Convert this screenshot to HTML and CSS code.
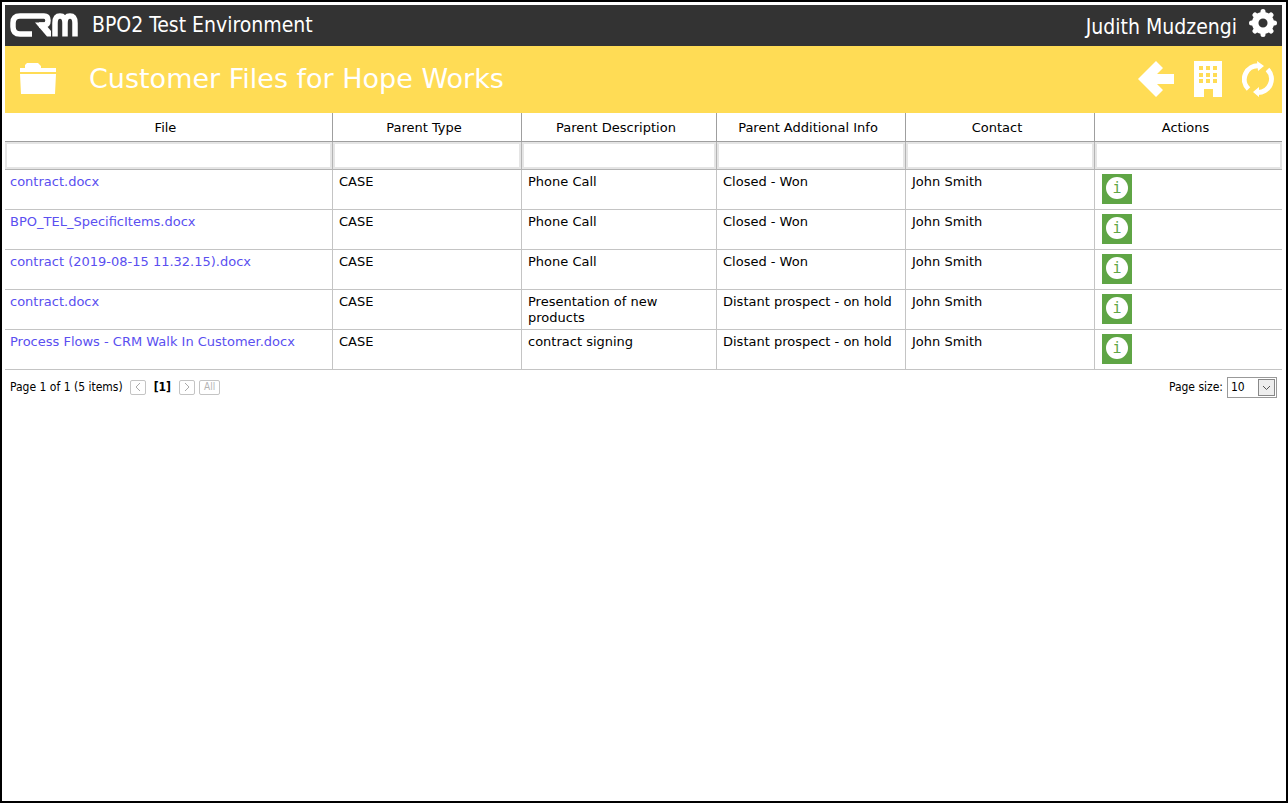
FILE: index.html
```html
<!DOCTYPE html>
<html lang="en">
<head>
<meta charset="utf-8">
<title>Customer Files for Hope Works</title>
<link rel="stylesheet" href="styles.css">
</head>
<body>
<header class="topbar">
  <svg class="logo" viewBox="0 0 68 24" role="img" aria-label="CRM logo" fill="none" stroke="#fff" stroke-width="5">
    <path d="M22 21H10Q3 21 3 14V10Q3 3 10 3H34Q38 3 38 7.500T34 12H29" stroke-width="5.500"/>
    <path fill="#fff" stroke="none" d="M25 9.500H34L41 18V23.500H37Z"/>
    <path d="M45 23.500V10Q45 3 50 3T55 10V23.500M55 10Q55 3 60 3T65 10V23.500" stroke-width="5.500"/>
  </svg>
  <span class="env">BPO2 Test Environment</span>
  <span class="user">Judith Mudzengi</span>
  <button class="icon-btn settings" type="button" aria-label="Settings">
    <svg width="28" height="28" viewBox="0 0 28 28">
      <circle cx="14" cy="14" r="7.800" fill="none" stroke="#fff" stroke-width="6.500"/>
      <g stroke="#fff" stroke-width="6" stroke-linecap="round"><path stroke-width="5" d="M14 2.500V6M14 22V25.500M2.500 14H6M22 14H25.500M6 6L8 8M20 20L22 22M22 6L20 8M6 22L8 20"/></g>
    </svg>
  </button>
</header>
<div class="titlebar">
  <svg class="folder" width="36" height="32" viewBox="0 0 36 32" fill="#fff">
    <path d="M0 9V5H5V2L7 0H18L21 3V5H36V9ZM0 11H36L35 31H1Z"/>
  </svg>
  <h1 class="title">Customer Files for Hope Works</h1>
  <button class="icon-btn" type="button" aria-label="Back">
    <svg width="36" height="36" viewBox="0 0 36 36" fill="#fff"><path d="M0 18L18 0L25 7L19 13H36V23H19L25 29L18 36Z"/></svg>
  </button>
  <button class="icon-btn" type="button" aria-label="Company">
    <svg width="28" height="36" viewBox="0 0 28 36" fill="#fff" fill-rule="evenodd"><path d="M0 0H28V36H19V28H10V36H0ZM5 5V9H9V5ZM12 5V9H16V5ZM19 5V9H23V5ZM5 12V16H9V12ZM12 12V16H16V12ZM19 12V16H23V12ZM5 18V22H9V18ZM12 18V22H16V18ZM19 18V22H23V18Z"/></svg>
  </button>
  <button class="icon-btn" type="button" aria-label="Refresh">
    <svg width="32" height="36" viewBox="0 0 32 36"><g fill="none" stroke="#fff" stroke-width="5"><path d="M6.500 28A13.500 13.500 0 0 1 17 4.800M25.500 8.500A13.500 13.500 0 0 1 15 31.500"/></g><path fill="#fff" d="M15 0L22 5L16 10ZM17 26V36L11 31Z"/></svg>
  </button>
</div>
<main>
<table class="grid">
  <colgroup><col><col class="c-mid"><col class="c-desc"><col class="c-mid"><col class="c-mid"><col class="c-act"></colgroup>
  <thead>
    <tr><th>File</th><th>Parent Type</th><th>Parent Description</th><th>Parent Additional Info</th><th>Contact</th><th>Actions</th></tr>
    <tr class="filters">
      <td><input type="text" aria-label="Filter File"></td><td><input type="text" aria-label="Filter Parent Type"></td><td><input type="text" aria-label="Filter Parent Description"></td><td><input type="text" aria-label="Filter Parent Additional Info"></td><td><input type="text" aria-label="Filter Contact"></td><td><input type="text" aria-label="Filter Actions"></td>
    </tr>
  </thead>
  <tbody>
    <tr><td><a href="#">contract.docx</a></td><td>CASE</td><td>Phone Call</td><td>Closed - Won</td><td>John Smith</td><td><button class="info" type="button" aria-label="Details"><span>i</span></button></td></tr>
    <tr><td><a href="#">BPO_TEL_SpecificItems.docx</a></td><td>CASE</td><td>Phone Call</td><td>Closed - Won</td><td>John Smith</td><td><button class="info" type="button" aria-label="Details"><span>i</span></button></td></tr>
    <tr><td><a href="#">contract (2019-08-15 11.32.15).docx</a></td><td>CASE</td><td>Phone Call</td><td>Closed - Won</td><td>John Smith</td><td><button class="info" type="button" aria-label="Details"><span>i</span></button></td></tr>
    <tr><td><a href="#">contract.docx</a></td><td>CASE</td><td>Presentation of new products</td><td>Distant prospect - on hold</td><td>John Smith</td><td><button class="info" type="button" aria-label="Details"><span>i</span></button></td></tr>
    <tr><td><a href="#">Process Flows - CRM Walk In Customer.docx</a></td><td>CASE</td><td>contract signing</td><td>Distant prospect - on hold</td><td>John Smith</td><td><button class="info" type="button" aria-label="Details"><span>i</span></button></td></tr>
  </tbody>
</table>
<div class="pager">
  <span>Page 1 of 1 (5 items)</span>
  <button class="pg" type="button" disabled aria-label="Previous"><svg width="6" height="8" viewBox="0 0 6 8"><path d="M5 0L1 4L5 8"/></svg></button>
  <b class="current">[1]</b>
  <button class="pg" type="button" disabled aria-label="Next"><svg width="6" height="8" viewBox="0 0 6 8"><path d="M1 0L5 4L1 8"/></svg></button>
  <button class="pg all" type="button" disabled>All</button>
  <label class="size-label" for="size">Page size:</label>
  <span class="size"><select id="size"><option>10</option><option>20</option><option>50</option></select><svg class="drop" viewBox="0 0 15 15"><path d="M4 6L7.500 9.500L11 6"/></svg></span>
</div>
</main>
</body>
</html>
```
FILE: styles.css
```css
* { box-sizing: border-box; }
body {
  margin: 0;
  min-height: 100vh;
  padding: 3px 4px 3px 3px;
  border: 2px solid #000;
  background: #fff;
  color: #000;
  font: 13px/16px Verdana, "DejaVu Sans", sans-serif;
}
button { padding: 0; border: 0; background: none; font: inherit; }
svg { display: block; }
.icon-btn { flex: none; }
.topbar {
  display: flex;
  align-items: center;
  height: 41px;
  padding: 0 5px 2px;
  background: #333;
  color: #fff;
  font: 21px/28px Tahoma, "DejaVu Sans Condensed", sans-serif;
}
.logo { width: 68px; height: 24px; margin-right: 14px; }
.user { margin: 5px 12px 0 auto; }
.settings { margin-bottom: 3px; }
.titlebar {
  display: flex;
  align-items: center;
  gap: 20px;
  height: 67px;
  padding: 0 8px 2px 15px;
  background: #ffdc55;
  color: #fff;
}
.title { flex: 1; margin: 0 0 0 13px; font-size: 27px; line-height: 32px; font-weight: 400; }
.grid { width: 100%; table-layout: fixed; border-collapse: separate; border-spacing: 0; }
.c-mid { width: 189px; }
.c-desc { width: 195px; }
.c-act { width: 187px; }
.grid th, .grid td { border-right: 1px solid #c4c4c4; border-bottom: 1px solid #c4c4c4; }
.grid th { height: 29px; padding: 2px 11px 0 5px; border-color: #9f9f9f; font-weight: 400; white-space: nowrap; }
.grid th:last-child, .grid td:last-child { border-right: 0; }
.grid td { height: 40px; padding: 4px 0 3px 6px; vertical-align: top; }
.grid td:first-child { padding-left: 5px; }
.grid td:last-child { padding-left: 7px; }
.grid .filters td { height: 28px; padding: 0; border-color: #b4b4b4; }
.filters input { display: block; width: 100%; height: 27px; border: 2px solid #e5e5e5; background: #fff; outline: 0; }
.grid a { color: #5a4ff0; text-decoration: none; }
.info { display: flex; justify-content: center; width: 30px; height: 30px; padding-top: 3px; background: #5fa545; }
.info span { width: 22px; height: 22px; border-radius: 50%; background: #fff; color: #5fa545; font: 15px/22px "DejaVu Sans Mono", monospace; }
.pager { display: flex; align-items: center; height: 36px; padding: 0 5px 2px; font: 12px/16px Tahoma, "DejaVu Sans Condensed", sans-serif; }
.pg { display: flex; align-items: center; justify-content: center; width: 16px; height: 15px; margin-left: 7px; border: 1px solid #c4c4c4; border-radius: 2px; color: #b4b4b4; }
.pg path { fill: none; stroke: #aaa; }
.current { margin: 0 1px 0 8px; }
.all { width: 21px; margin-left: 4px; font-size: 10px; line-height: 12px; }
.size-label { margin: 0 4px 0 auto; }
.size { position: relative; display: block; width: 50px; height: 21px; }
.size select { width: 100%; height: 100%; padding: 0 3px; border: 1px solid #999; border-radius: 0; appearance: none; background: #fff; color: #000; font: inherit; }
.drop { position: absolute; top: 2px; right: 2px; width: 17px; height: 17px; border: 1px solid #888; background: #eee; pointer-events: none; }
.drop path { fill: none; stroke: #555; }
```
